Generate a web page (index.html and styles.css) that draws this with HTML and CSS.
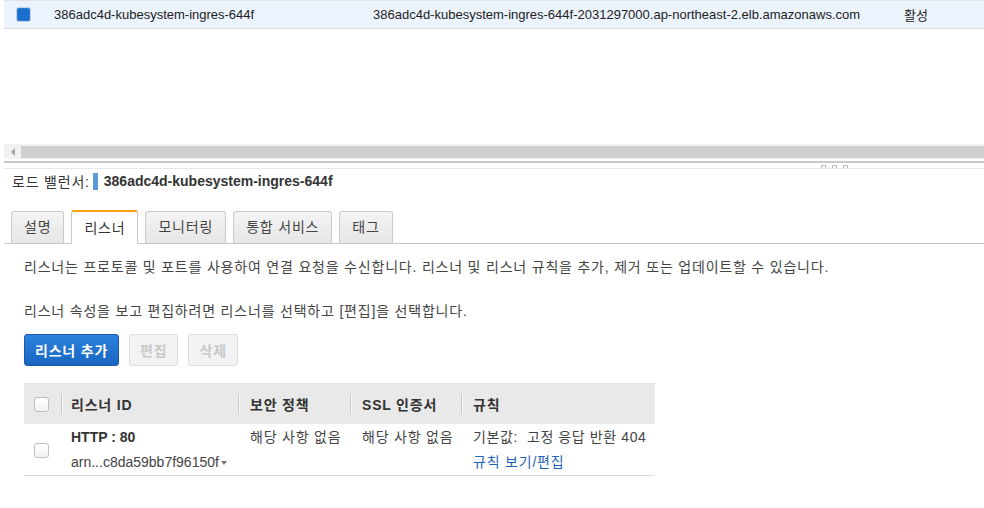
FILE: index.html
```html
<!DOCTYPE html>
<html lang="ko">
<head>
    <meta charset="UTF-8">
    <meta name="viewport" content="width=device-width, initial-scale=1.0">
    <title>로드 밸런서</title>
    <link rel="stylesheet" href="styles.css">
</head>
<body>
    <div class="list-pane">
        <div class="list-row selected">
            <div class="cell"><span class="check checked"></span></div>
            <div class="cell">386adc4d-kubesystem-ingres-644f</div>
            <div class="cell">386adc4d-kubesystem-ingres-644f-2031297000.ap-northeast-2.elb.amazonaws.com</div>
            <div class="cell">활성</div>
        </div>
        <div class="list-space"></div>
        <div class="hscroll">
            <div class="hscroll-btn"><span class="arrow-left"></span></div>
            <div class="hscroll-thumb"></div>
        </div>
    </div>

    <div class="splitter">
        <div class="grip"><span></span><span></span><span></span></div>
    </div>

    <div class="detail-pane">
        <div class="detail-title">
            <span class="label">로드 밸런서:</span>
            <span class="marker"></span>
            <span class="name">386adc4d-kubesystem-ingres-644f</span>
        </div>

        <div class="tabs">
            <div class="tab">설명</div>
            <div class="tab active">리스너</div>
            <div class="tab">모니터링</div>
            <div class="tab">통합 서비스</div>
            <div class="tab">태그</div>
        </div>

        <div class="tab-body">
            <p class="info">리스너는 프로토콜 및 포트를 사용하여 연결 요청을 수신합니다. 리스너 및 리스너 규칙을 추가, 제거 또는 업데이트할 수 있습니다.</p>
            <p class="info">리스너 속성을 보고 편집하려면 리스너를 선택하고 [편집]을 선택합니다.</p>

            <div class="actions">
                <button class="btn primary">리스너 추가</button>
                <button class="btn" disabled>편집</button>
                <button class="btn" disabled>삭제</button>
            </div>

            <div class="grid">
                <div class="th"><span class="check"></span></div>
                <div class="th"><span class="divider"></span>리스너 ID</div>
                <div class="th"><span class="divider"></span>보안 정책</div>
                <div class="th"><span class="divider"></span>SSL 인증서</div>
                <div class="th"><span class="divider"></span>규칙</div>

                <div class="td check-cell"><span class="check"></span></div>
                <div class="td">
                    <div class="proto">HTTP : 80</div>
                    <div class="arn">arn...c8da59bb7f96150f <span class="caret"></span></div>
                </div>
                <div class="td">해당 사항 없음</div>
                <div class="td">해당 사항 없음</div>
                <div class="td">
                    <div class="rule">기본값:&nbsp; 고정 응답 반환 404</div>
                    <a href="#" class="link">규칙 보기/편집</a>
                </div>
            </div>
        </div>
    </div>
</body>
</html>
```

FILE: styles.css
```css
body {
    margin: 0;
    background: #fff;
    color: #333;
    font-family: "Liberation Sans", "Noto Sans CJK KR", sans-serif;
    font-size: 14px;
    overflow: hidden;
}

/* upper list */
.list-pane {
    display: flex;
    flex-direction: column;
    height: 161px;
    padding-left: 4px;
}

.list-row {
    display: grid;
    grid-template-columns: 50px 319px 531px 1fr;
    align-items: center;
    height: 27px;
    border-top: 1px solid #e2e2e2;
    border-bottom: 1px solid #dcdcdc;
    font-size: 13px;
    color: #222;
}

.list-row.selected {
    background: #ebf3fd;
}

.list-row .cell:first-child {
    padding-left: 12px;
    display: flex;
}

.list-space {
    flex: 1;
}

.hscroll {
    display: flex;
    height: 15px;
    background: #f1f1f1;
    margin-bottom: 2px;
}

.hscroll-btn {
    width: 17px;
    display: flex;
    align-items: center;
    justify-content: center;
}

.arrow-left {
    width: 0;
    height: 0;
    border-top: 4px solid transparent;
    border-bottom: 4px solid transparent;
    border-right: 4px solid #a3a3a3;
}

.hscroll-thumb {
    flex: 1;
    margin: 2px 0 1px;
    background: #d0d0d0;
}

/* splitter */
.splitter {
    height: 5px;
    margin-left: 4px;
    border-top: 2px solid #c8c8c8;
    border-bottom: 1px solid #e8e8e8;
    display: flex;
    justify-content: flex-end;
    align-items: flex-end;
}

.grip {
    display: flex;
    gap: 6px;
    margin-right: 136px;
}

.grip span {
    width: 3px;
    height: 2px;
    border: 1px solid #b8b8b8;
    border-bottom: none;
    border-radius: 1px 1px 0 0;
}

/* detail */
.detail-title {
    display: flex;
    align-items: center;
    height: 22px;
    margin-top: 1px;
    padding-left: 12px;
}

.detail-title .label {
    letter-spacing: 0.8px;
}

.detail-title .marker {
    width: 5px;
    height: 17px;
    background: #5a9cd8;
    margin: 0 6px 0 3px;
}

.detail-title .name {
    font-weight: bold;
}

.tabs {
    display: flex;
    gap: 7px;
    margin: 18px 0 0 4px;
    padding-left: 7px;
    border-bottom: 1px solid #c6c6c6;
    height: 33px;
}

.tab {
    padding: 0 12px;
    line-height: 31px;
    margin-top: 1px;
    border: 1px solid #cacaca;
    border-bottom: none;
    border-radius: 3px 3px 0 0;
    background: linear-gradient(#f4f4f4, #e6e6e6);
    color: #444;
    letter-spacing: 0.8px;
}

.tab.active {
    margin-top: 0;
    margin-bottom: -1px;
    line-height: 32px;
    background: #fff;
    border-top: 2px solid #f7a10f;
    color: #333;
}

.tab-body {
    padding-left: 24px;
}

.info {
    margin: 0;
    line-height: 22px;
    color: #444;
    letter-spacing: 0.8px;
}

.info:first-child {
    margin-top: 12px;
}

.info + .info {
    margin-top: 22px;
}

.actions {
    display: flex;
    gap: 10px;
    margin-top: 12px;
}

.btn {
    height: 32px;
    padding: 0 10px;
    font-family: inherit;
    font-size: 14px;
    font-weight: bold;
    letter-spacing: 0.8px;
    border-radius: 3px;
    border: 1px solid #dcdcdc;
    background: #f3f3f3;
    color: #c9c9c9;
}

.btn.primary {
    padding: 0 10px;
    border-color: #1a5aa8;
    background: linear-gradient(#2b82dc, #1966c2);
    color: #fff;
}

/* listener table */
.grid {
    display: grid;
    grid-template-columns: 37px 177px 112px 111px 194px;
    margin-top: 17px;
    width: 631px;
}

.th {
    position: relative;
    height: 40px;
    display: flex;
    align-items: center;
    padding-left: 10px;
    background: #e9e9e9;
    border-top: 1px solid #e3e3e3;
    font-weight: bold;
    color: #333;
    letter-spacing: 0.8px;
}

.th:nth-child(3), .th:nth-child(4), .th:nth-child(5) {
    padding-left: 12px;
}

.divider {
    position: absolute;
    left: 0;
    top: 10px;
    width: 1px;
    height: 20px;
    background: #c8c8c8;
    box-shadow: 1px 0 0 #f8f8f8;
}

.check {
    display: inline-block;
    width: 13px;
    height: 13px;
    border: 1px solid #bdbdbd;
    border-radius: 3px;
    background: linear-gradient(#fff, #f2f2f2);
}

.check.checked {
    border-color: #c4d2e2;
    background: #1c6fcf;
    box-shadow: inset 0 0 0 1px #2a78d3;
}

.td {
    padding: 1px 0 0 10px;
    line-height: 25px;
    border-bottom: 1px solid #dcdcdc;
    color: #444;
    letter-spacing: 0.8px;
}

.td:nth-child(n+8) {
    padding-left: 12px;
}

.check-cell {
    display: flex;
    align-items: center;
}

.proto, .arn {
    letter-spacing: 0;
}

.proto {
    font-weight: bold;
    color: #333;
}

.rule {
    letter-spacing: 0.6px;
}

.caret {
    display: inline-block;
    width: 0;
    height: 0;
    margin-left: -2px;
    vertical-align: middle;
    border-left: 3px solid transparent;
    border-right: 3px solid transparent;
    border-top: 4px solid #777;
}

.link {
    color: #1f62b8;
    text-decoration: none;
}
```
